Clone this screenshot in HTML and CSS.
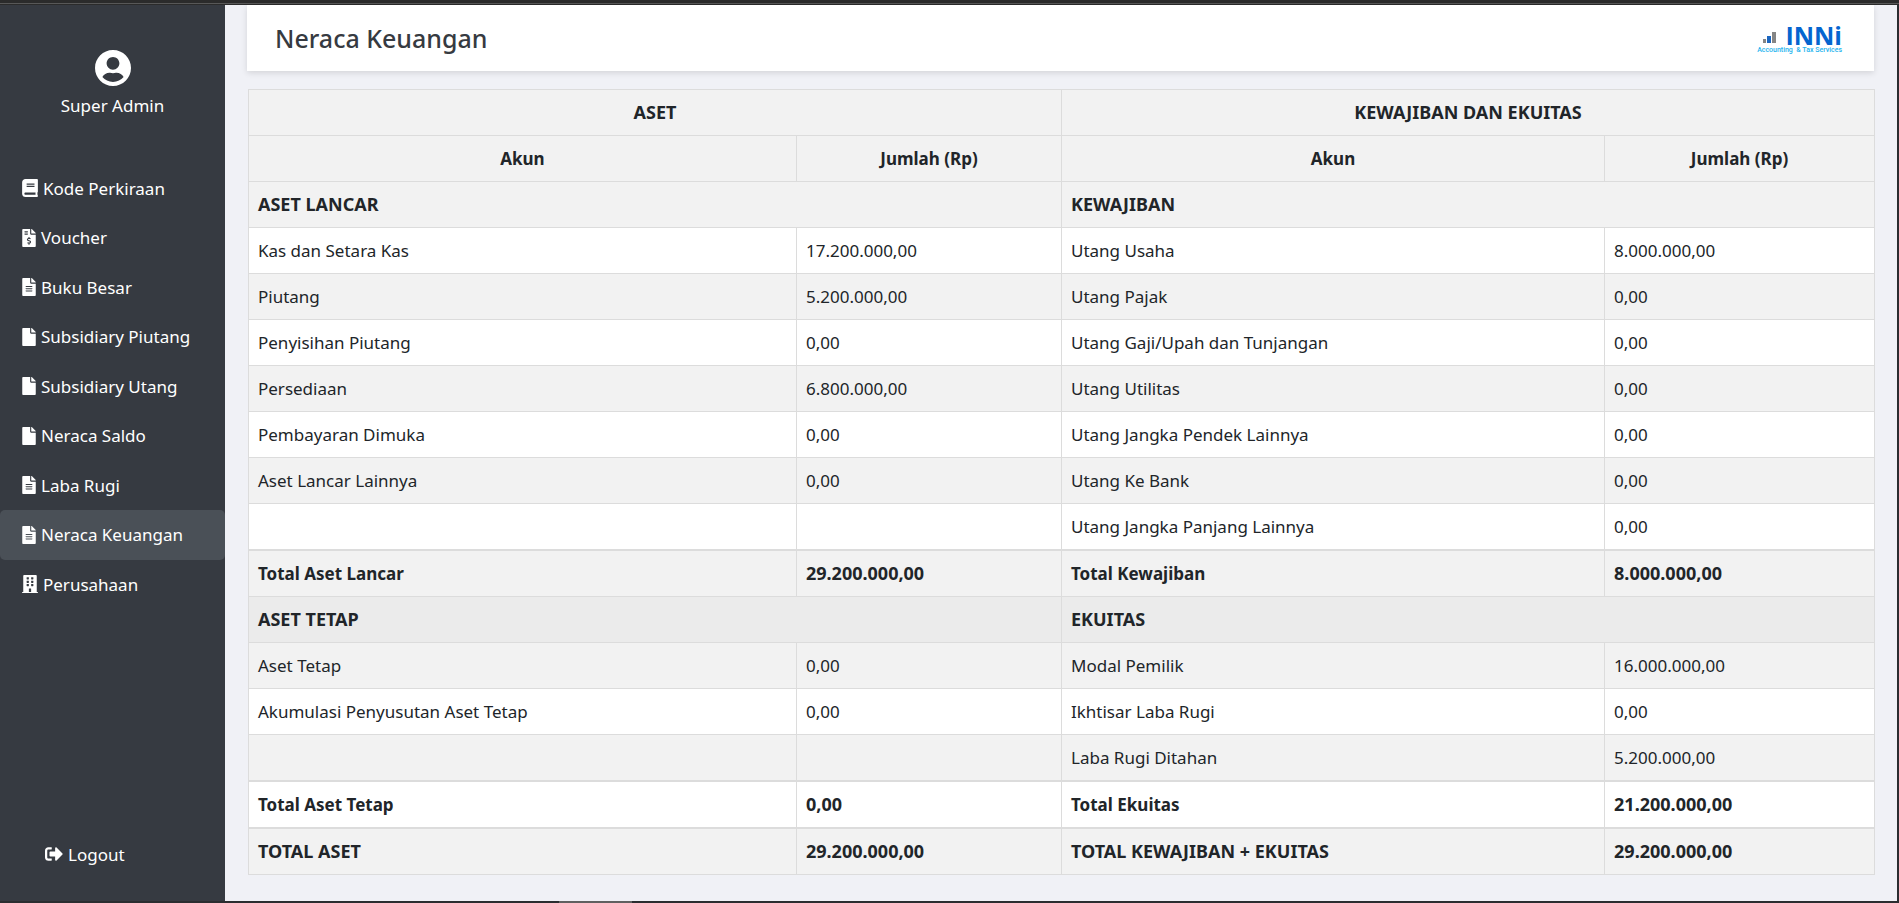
FILE: index.html
```html
<!DOCTYPE html>
<html lang="id">
<head>
<meta charset="utf-8">
<title>Neraca Keuangan</title>
<link rel="stylesheet" href="styles.css">
</head>
<body>
<svg class="sprite" aria-hidden="true">
  <symbol id="book" viewBox="0 0 448 512"><path fill="currentColor" d="M448 360V24c0-13.300-10.700-24-24-24H96C43 0 0 43 0 96v320c0 53 43 96 96 96h328c13.300 0 24-10.700 24-24v-16c0-7.500-3.500-14.300-8.900-18.700-4.200-15.400-4.200-59.300 0-74.700 5.400-4.300 8.900-11.100 8.900-18.600zM128 134c0-3.300 2.700-6 6-6h212c3.300 0 6 2.700 6 6v20c0 3.300-2.700 6-6 6H134c-3.300 0-6-2.700-6-6v-20zm0 64c0-3.300 2.700-6 6-6h212c3.300 0 6 2.700 6 6v20c0 3.300-2.700 6-6 6H134c-3.300 0-6-2.700-6-6v-20zm253.400 250H96c-17.700 0-32-14.300-32-32 0-17.600 14.400-32 32-32h285.400c-1.900 17.100-1.900 46.900 0 64z"/></symbol>
  <symbol id="file" viewBox="0 0 384 512"><path fill="currentColor" d="M224 136V0H24C10.700 0 0 10.700 0 24v464c0 13.300 10.700 24 24 24h336c13.300 0 24-10.700 24-24V160H248c-13.200 0-24-10.800-24-24zm160-14.100v6.100H256V0h6.100c6.400 0 12.500 2.500 17 7l97.900 98c4.500 4.500 7 10.600 7 16.900z"/></symbol>
  <symbol id="file-lines" viewBox="0 0 384 512"><path fill="currentColor" d="M224 136V0H24C10.700 0 0 10.700 0 24v464c0 13.300 10.700 24 24 24h336c13.300 0 24-10.700 24-24V160H248c-13.200 0-24-10.800-24-24zm64 236c0 6.600-5.400 12-12 12H108c-6.600 0-12-5.400-12-12v-8c0-6.600 5.400-12 12-12h168c6.600 0 12 5.400 12 12v8zm0-64c0 6.600-5.400 12-12 12H108c-6.600 0-12-5.400-12-12v-8c0-6.600 5.400-12 12-12h168c6.600 0 12 5.400 12 12v8zm0-72v8c0 6.600-5.400 12-12 12H108c-6.600 0-12-5.400-12-12v-8c0-6.600 5.400-12 12-12h168c6.600 0 12 5.400 12 12zm96-114.100v6.100H256V0h6.100c6.400 0 12.500 2.500 17 7l97.900 98c4.500 4.500 7 10.600 7 16.900z"/></symbol>
  <symbol id="invoice" viewBox="0 0 384 512"><path fill="currentColor" fill-rule="evenodd" d="M224 136V0H24C10.700 0 0 10.700 0 24v464c0 13.300 10.700 24 24 24h336c13.300 0 24-10.700 24-24V160H248c-13.200 0-24-10.800-24-24zM64 72c0-4.400 3.600-8 8-8h80c4.400 0 8 3.600 8 8v16c0 4.400-3.600 8-8 8H72c-4.400 0-8-3.600-8-8V72zm0 80v-16c0-4.400 3.600-8 8-8h80c4.400 0 8 3.600 8 8v16c0 4.400-3.600 8-8 8H72c-4.400 0-8-3.600-8-8zm144 263.900V440c0 4.400-3.600 8-8 8h-16c-4.400 0-8-3.600-8-8v-24.300c-11.300-.6-22.300-4.500-31.400-11.300-3.900-2.900-4.100-8.800-.6-12.100l11.800-11.200c2.800-2.600 6.900-2.800 10.100-.7 3.900 2.400 8.300 3.700 12.800 3.700h28.100c6.500 0 11.800-5.900 11.800-13.200 0-6-3.600-11.200-8.800-12.700l-45-13.500c-18.600-5.600-31.600-23.400-31.600-43.400 0-24.500 19.100-44.400 42.700-45.100V232c0-4.400 3.600-8 8-8h16c4.400 0 8 3.600 8 8v24.300c11.300.6 22.300 4.500 31.400 11.300 3.900 2.900 4.100 8.800.6 12.100l-11.800 11.200c-2.800 2.600-6.900 2.800-10.100.7-3.900-2.400-8.300-3.700-12.800-3.700h-28.100c-6.500 0-11.800 5.900-11.800 13.200 0 6 3.600 11.200 8.800 12.700l45 13.500c18.600 5.600 31.600 23.400 31.600 43.400 0 24.500-19.100 44.400-42.700 45.200zM384 121.900v6.100H256V0h6.100c6.400 0 12.500 2.500 17 7l97.900 98c4.500 4.500 7 10.600 7 16.900z"/></symbol>
  <symbol id="building" viewBox="0 0 448 512"><path fill="currentColor" fill-rule="evenodd" d="M436 480h-20V24c0-13.300-10.700-24-24-24H56C42.700 0 32 10.700 32 24v456H12c-6.600 0-12 5.400-12 12v20h448v-20c0-6.600-5.400-12-12-12zM128 76c0-6.600 5.400-12 12-12h40c6.600 0 12 5.400 12 12v40c0 6.600-5.400 12-12 12h-40c-6.600 0-12-5.400-12-12V76zm0 96c0-6.600 5.400-12 12-12h40c6.600 0 12 5.400 12 12v40c0 6.600-5.400 12-12 12h-40c-6.600 0-12-5.400-12-12v-40zm52 148h-40c-6.600 0-12-5.400-12-12v-40c0-6.600 5.400-12 12-12h40c6.600 0 12 5.400 12 12v40c0 6.600-5.400 12-12 12zm76 160h-64v-84c0-6.600 5.400-12 12-12h40c6.600 0 12 5.400 12 12v84zm64-172c0 6.600-5.400 12-12 12h-40c-6.600 0-12-5.400-12-12v-40c0-6.600 5.400-12 12-12h40c6.600 0 12 5.400 12 12v40zm0-96c0 6.600-5.400 12-12 12h-40c-6.600 0-12-5.400-12-12v-40c0-6.600 5.400-12 12-12h40c6.600 0 12 5.400 12 12v40zm0-96c0 6.600-5.400 12-12 12h-40c-6.600 0-12-5.400-12-12V76c0-6.600 5.400-12 12-12h40c6.600 0 12 5.400 12 12v40z"/></symbol>
  <symbol id="user" viewBox="0 0 496 496"><path fill="currentColor" d="M248 0C111 0 0 111 0 248s111 248 248 248 248-111 248-248S385 0 248 0zm0 96c48.600 0 88 39.400 88 88s-39.400 88-88 88-88-39.400-88-88 39.400-88 88-88zm0 344c-58.700 0-111.300-26.600-146.500-68.200 18.800-35.400 55.600-59.800 98.500-59.800 2.400 0 4.800.4 7.100 1.100 13 4.200 26.600 6.900 40.900 6.900s28-2.700 40.900-6.900c2.300-.7 4.700-1.100 7.100-1.100 42.900 0 79.700 24.400 98.500 59.800C359.300 413.400 306.700 440 248 440z"/></symbol>
  <symbol id="logout" viewBox="0 0 512 512"><path fill="currentColor" d="M497 273L329 441c-15 15-41 4.500-41-17v-96H152c-13.300 0-24-10.700-24-24v-96c0-13.300 10.700-24 24-24h136V88c0-21.400 25.900-32 41-17l168 168c9.300 9.400 9.300 24.600 0 34zM192 436v-40c0-6.600-5.400-12-12-12H96c-17.700 0-32-14.300-32-32V160c0-17.700 14.300-32 32-32h84c6.600 0 12-5.400 12-12V76c0-6.600-5.400-12-12-12H96c-53 0-96 43-96 96v192c0 53 43 96 96 96h84c6.600 0 12-5.400 12-12z"/></symbol>
</svg>
<div class="frame-top"></div>
<div class="app">
  <aside class="sidebar">
    <div class="profile">
      <svg class="avatar" aria-hidden="true"><use href="#user"/></svg>
      <span>Super Admin</span>
    </div>
    <nav class="menu">
      <a class="item" href="#"><svg class="icon wide"><use href="#book"/></svg>Kode Perkiraan</a>
      <a class="item" href="#"><svg class="icon"><use href="#invoice"/></svg>Voucher</a>
      <a class="item" href="#"><svg class="icon"><use href="#file-lines"/></svg>Buku Besar</a>
      <a class="item" href="#"><svg class="icon"><use href="#file"/></svg>Subsidiary Piutang</a>
      <a class="item" href="#"><svg class="icon"><use href="#file"/></svg>Subsidiary Utang</a>
      <a class="item" href="#"><svg class="icon"><use href="#file"/></svg>Neraca Saldo</a>
      <a class="item" href="#"><svg class="icon"><use href="#file-lines"/></svg>Laba Rugi</a>
      <a class="item active" href="#" aria-current="page"><svg class="icon"><use href="#file-lines"/></svg>Neraca Keuangan</a>
      <a class="item" href="#"><svg class="icon wide"><use href="#building"/></svg>Perusahaan</a>
    </nav>
    <a class="item logout" href="#"><svg class="icon exit"><use href="#logout"/></svg>Logout</a>
  </aside>
  <main class="main">
    <header class="header">
      <h1 class="title">Neraca Keuangan</h1>
      <div class="logo">
        <div class="brand">
          <svg class="bars" viewBox="0 0 13 11" aria-hidden="true"><path fill="#858585" d="M0 7h3v4H0zM9 0h4v11H9z"/><path fill="#1b66c0" d="M4 4h4v7H4z"/></svg>
          <span class="name">INNi</span>
        </div>
        <span class="tagline">Accounting &nbsp;&amp; Tax Services</span>
      </div>
    </header>
    <table class="balance">
      <colgroup><col class="c1"><col class="c2"><col class="c3"><col class="c4"></colgroup>
      <thead>
        <tr class="shade caps"><th colspan="2">ASET</th><th colspan="2">KEWAJIBAN DAN EKUITAS</th></tr>
        <tr class="shade"><th>Akun</th><th>Jumlah (Rp)</th><th>Akun</th><th>Jumlah (Rp)</th></tr>
      </thead>
      <tbody>
        <tr class="shade strong caps"><td colspan="2">ASET LANCAR</td><td colspan="2">KEWAJIBAN</td></tr>
        <tr><td>Kas dan Setara Kas</td><td>17.200.000,00</td><td>Utang Usaha</td><td>8.000.000,00</td></tr>
        <tr class="shade"><td>Piutang</td><td>5.200.000,00</td><td>Utang Pajak</td><td>0,00</td></tr>
        <tr><td>Penyisihan Piutang</td><td>0,00</td><td>Utang Gaji/Upah dan Tunjangan</td><td>0,00</td></tr>
        <tr class="shade"><td>Persediaan</td><td>6.800.000,00</td><td>Utang Utilitas</td><td>0,00</td></tr>
        <tr><td>Pembayaran Dimuka</td><td>0,00</td><td>Utang Jangka Pendek Lainnya</td><td>0,00</td></tr>
        <tr class="shade"><td>Aset Lancar Lainnya</td><td>0,00</td><td>Utang Ke Bank</td><td>0,00</td></tr>
        <tr><td></td><td></td><td>Utang Jangka Panjang Lainnya</td><td>0,00</td></tr>
        <tr class="shade strong total"><td>Total Aset Lancar</td><td>29.200.000,00</td><td>Total Kewajiban</td><td>8.000.000,00</td></tr>
        <tr class="darker strong caps"><td colspan="2">ASET TETAP</td><td colspan="2">EKUITAS</td></tr>
        <tr class="shade"><td>Aset Tetap</td><td>0,00</td><td>Modal Pemilik</td><td>16.000.000,00</td></tr>
        <tr><td>Akumulasi Penyusutan Aset Tetap</td><td>0,00</td><td>Ikhtisar Laba Rugi</td><td>0,00</td></tr>
        <tr class="shade"><td></td><td></td><td>Laba Rugi Ditahan</td><td>5.200.000,00</td></tr>
        <tr class="strong total"><td>Total Aset Tetap</td><td>0,00</td><td>Total Ekuitas</td><td>21.200.000,00</td></tr>
        <tr class="shade strong caps total"><td>TOTAL ASET</td><td>29.200.000,00</td><td>TOTAL KEWAJIBAN + EKUITAS</td><td>29.200.000,00</td></tr>
      </tbody>
    </table>
  </main>
</div>
<div class="frame-bottom"><div class="handle"></div></div>
</body>
</html>
```

FILE: styles.css
```css
* { box-sizing: border-box; }

body {
  margin: 0;
  min-height: 100vh;
  display: flex;
  flex-direction: column;
  background: #f0f1f6;
  color: #212529;
  font-family: "Noto Sans", "Open Sans", sans-serif;
  font-size: 17px;
  line-height: 1.5;
}

.sprite { display: none; }

.frame-top {
  height: 5px;
  background: #2b2b2b;
  background-image: linear-gradient(#585858, #585858);
  background-size: 100% 1px;
  background-position: 0 3px;
  background-repeat: no-repeat;
}

.frame-bottom {
  height: 2px;
  background: #2b2d30;
  padding-left: 559px;
}

.handle {
  width: 73px;
  height: 2px;
  background: #606060;
}

.app {
  flex: 1;
  display: flex;
  border-right: 2px solid #2b2d30;
}

.sidebar {
  width: 225px;
  flex: none;
  display: flex;
  flex-direction: column;
  background: #363a41;
  color: #fff;
}

.profile {
  display: flex;
  flex-direction: column;
  align-items: center;
  gap: 7px;
  padding-top: 45px;
}

.avatar {
  width: 36px;
  height: 36px;
}

.menu { margin-top: 45px; }

.item {
  display: flex;
  align-items: center;
  gap: 5px;
  padding: 12px 22px;
  border-radius: 5px;
  color: #fff;
  text-decoration: none;
  white-space: nowrap;
}

.item.active { background: #4a5057; }

.icon {
  width: 14px;
  height: 18px;
  flex: none;
}

.icon.wide { width: 16px; }

.icon.exit { width: 18px; }

.logout {
  margin-top: auto;
  padding: 12px 45px;
  margin-bottom: 22px;
}

.main {
  flex: 1;
  padding: 0 23px 26px 22px;
}

.header {
  display: flex;
  align-items: center;
  justify-content: space-between;
  height: 66px;
  padding: 1px 32px 0 28px;
  background: #fff;
  box-shadow: 0 2px 6px rgba(0, 0, 0, 0.12);
}

.title {
  margin: 0;
  font-size: 25px;
  font-weight: 500;
  color: #363a41;
}

.logo {
  display: flex;
  flex-direction: column;
  align-items: flex-end;
  width: 80px;
}

.brand {
  display: flex;
  align-items: flex-end;
  gap: 9px;
}

.bars {
  width: 13px;
  height: 11px;
  margin-bottom: 3px;
}

.name {
  color: #0565cf;
  font-family: "Open Sans", "Noto Sans", sans-serif;
  font-size: 25px;
  font-weight: 700;
  line-height: 22px;
}

.tagline {
  color: #23b3ee;
  font-family: Roboto, sans-serif;
  font-size: 7px;
  font-weight: 500;
  line-height: 8px;
  white-space: nowrap;
}

.balance {
  width: 100%;
  margin: 18px 0 0 1px;
  border-collapse: collapse;
  table-layout: fixed;
  background: #fff;
  line-height: 29px;
}

.c1 { width: 33.7%; }
.c2 { width: 16.3%; }
.c3 { width: 33.4%; }
.c4 { width: 16.6%; }

.balance th,
.balance td {
  height: 46px;
  padding: 8px 9px;
  border: 1px solid #dcdcdc;
  text-align: left;
}

.balance th { text-align: center; }

.shade { background: #f2f2f2; }

.darker { background: #ebebeb; }

.strong { font-weight: 700; }

.caps,
.total td:nth-child(even) { font-size: 18px; }

.balance .total td { border-top-width: 2px; }
```
